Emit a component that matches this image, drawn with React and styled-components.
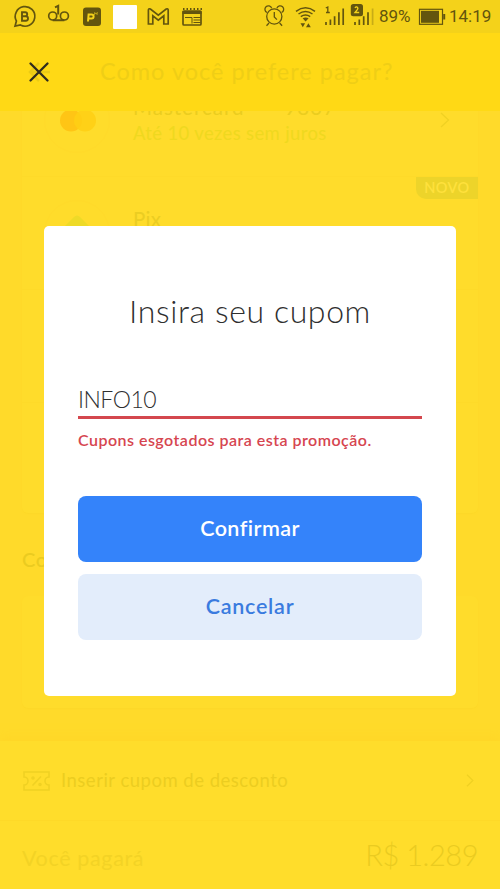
import styled, { createGlobalStyle } from "styled-components";

export default function App() {
    return (
        <>
            <GlobalStyle />
            <Screen>
                <StatusBar />
                <Header>
                    <CloseIcon />
                    <HeaderTitle>Como você prefere pagar?</HeaderTitle>
                </Header>

                <Content>
                    <PaymentCard>
                        <Row>
                            <Brand>
                                <svg width="38" height="24" viewBox="0 0 38 24">
                                    <circle cx="13" cy="12.5" r="11" fill="#FFC515" />
                                    <circle cx="27" cy="12.5" r="11" fill="#FFCF14" opacity="0.85" />
                                </svg>
                            </Brand>
                            <RowTexts>
                                <RowTitle>
                                    <span>Mastercard</span>
                                    <Mask>****</Mask>
                                    <span>9837</span>
                                </RowTitle>
                                <RowSubtitle>Até 10 vezes sem juros</RowSubtitle>
                            </RowTexts>
                            <Chevron width="10" height="16" viewBox="0 0 10 16">
                                <path d="M1 1l7.500 7L1 15" />
                            </Chevron>
                        </Row>
                        <Row>
                            <Brand>
                                <svg width="38" height="38" viewBox="0 0 38 38">
                                    <path d="M16 3q3-3 6 0l13 13q3 3 0 6L22 35q-3 3-6 0L3 22q-3-3 0-6z" fill="#EEDA27" />
                                </svg>
                            </Brand>
                            <PixTitle>Pix</PixTitle>
                            <Badge>NOVO</Badge>
                        </Row>
                        <Row />
                        <Row />
                    </PaymentCard>
                    <SectionTitle>Co</SectionTitle>
                    <EmptyCard />
                </Content>

                <Footer>
                    <CouponRow>
                        <TicketIcon />
                        <CouponLabel>Inserir cupom de desconto</CouponLabel>
                        <Chevron width="8" height="13" viewBox="0 0 8 13">
                            <path d="M1 .7l5.800 5.800L1 12.300" />
                        </Chevron>
                    </CouponRow>
                    <TotalRow>
                        <TotalLabel>Você pagará</TotalLabel>
                        <TotalValue>R$ 1.289</TotalValue>
                    </TotalRow>
                </Footer>

                <Modal>
                    <ModalTitle>Insira seu cupom</ModalTitle>
                    <Field>INFO10</Field>
                    <ErrorText>Cupons esgotados para esta promoção.</ErrorText>
                    <Button>Confirmar</Button>
                    <Button $secondary>Cancelar</Button>
                </Modal>
            </Screen>
        </>
    )
};

function StatusIcon({ from, to, children }) {
    return (
        <svg width={to - from} height="33" viewBox={`${from} 0 ${to - from} 33`} fill="none" stroke="#63550E" strokeWidth="1.7">
            {children}
        </svg>
    )
}

function StatusBar() {
    return (
        <Bar>
            <BarGroup>
                <StatusIcon from={12} to={40}>
                    <path d="M15 26.200l1.400-5.200a9.800 9.800 0 1 1 4 4z" />
                    <path d="M22 12.300h3.200a2 2 0 0 1 0 4H22zM22 16.300h3.800a2.200 2.200 0 0 1 0 4.400H22z" strokeWidth="1.900" />
                </StatusIcon>
                <StatusIcon from={40} to={76}>
                    <circle cx="52.700" cy="16" r="4" />
                    <circle cx="64.400" cy="16" r="4" />
                    <path d="M52.700 20.200h11.700M55 7.300l3.200-1.500v8.700" strokeWidth="2" />
                </StatusIcon>
                <StatusIcon from={76} to={107}>
                    <rect x="83" y="7.500" width="18" height="18.500" rx="3" fill="#63550E" stroke="none" />
                    <path d="M88 21.500l.6-7h3a1.900 1.900 0 0 1 0 4h-3" stroke="#F4D21A" strokeWidth="2" />
                    <path d="M94.800 12l-.3 3M97.300 12l-.3 3M94.500 13.500h2.500" stroke="#BFA617" strokeWidth="0.900" />
                </StatusIcon>
                <StatusIcon from={107} to={142}>
                    <rect x="113" y="5" width="24" height="24" rx="1" fill="#fff" stroke="none" />
                </StatusIcon>
                <StatusIcon from={142} to={176}>
                    <path d="M148.400 24V10.200q0-2 2-1.200l7.900 6.200 7.900-6.200q2-.8 2 1.200V24h-4.400v-8.200l-5.500 4.400-5.500-4.400V24z" />
                </StatusIcon>
                <StatusIcon from={176} to={210}>
                    <rect x="183" y="11" width="18" height="14" rx="1" />
                    <path d="M182.500 12.500h19" strokeWidth="3" />
                    <path d="M183 9h19" strokeWidth="2" strokeDasharray="1.500 2" />
                    <path d="M185 17.500h7v6M193.500 17.500h7M193.500 20h7M193.500 22.500h7" strokeWidth="1" />
                </StatusIcon>
            </BarGroup>
            <BarGroup>
                <StatusIcon from={262} to={290}>
                    <g strokeWidth="1.300">
                        <circle cx="274.300" cy="16.500" r="7.600" />
                        <path d="M274.300 12v5l2.600 2.600M269 23l-2.500 2.700M279.600 23l2.500 2.700" />
                        <path d="M267 12.500a3.500 3.500 0 1 1 4.700-4.400M281.600 12.500a3.500 3.500 0 1 0-4.700-4.400" />
                    </g>
                </StatusIcon>
                <StatusIcon from={290} to={320}>
                    <g strokeWidth="1.500">
                        <path d="M296 11.300q9.500-7 19 0M298.500 14q7-5 14 0M300.800 16.600q4.700-3.200 9.400 0" />
                        <path d="M302.600 18.200q3-1.600 6 0l-3 3.200z" fill="#63550E" stroke="none" />
                        <path d="M300.500 23.200h4.600l-2.300 4zM306 27.200h4.800l-2.400-4z" fill="#63550E" stroke="none" />
                    </g>
                </StatusIcon>
                <StatusIcon from={320} to={348}>
                    <path d="M326 22v3M330.400 19.500V25M334.600 16.300V25M338.900 12.300V25M343.200 8.500V25" />
                    <path d="M325.800 8l2-1v5.500M326 12.500h3.800" strokeWidth="1.300" />
                </StatusIcon>
                <StatusIcon from={348} to={379}>
                    <rect x="350.800" y="4" width="12.200" height="12.200" rx="2.500" fill="#63550E" stroke="none" />
                    <path d="M355 8q.8-1.400 2-1 1.500.8.300 2.600L355 12.500h4.200" stroke="#F4D21A" strokeWidth="1.400" />
                    <path d="M355 22v3M359.300 19.500V25M363.700 16.300V25M368 12.300V25" />
                    <path d="M372.600 8.500V25" opacity="0.300" />
                </StatusIcon>
                <BarText>89%</BarText>
                <StatusIcon from={415} to={449}>
                    <rect x="419.500" y="9.300" width="23" height="15" strokeWidth="1.200" />
                    <rect x="421" y="10.800" width="18" height="12" fill="#63550E" stroke="none" />
                    <path d="M444.200 14v5.500" strokeWidth="2" />
                </StatusIcon>
                <BarText>14:19</BarText>
            </BarGroup>
        </Bar>
    )
}

function CloseIcon() {
    return (
        <svg width="26" height="24" viewBox="0 0 26 24" fill="none">
            <path d="M4 12h20M13 3l-9 9 9 9" stroke="#EBCB16" strokeWidth="2.500" />
            <path d="M4.500 3.500l17 17M21.500 3.500l-17 17" stroke="#302C1E" strokeWidth="2.300" strokeLinecap="round" />
        </svg>
    )
}

function TicketIcon() {
    return (
        <svg width="27" height="20" viewBox="0 0 27 20" fill="none" stroke="#F0D123" strokeWidth="1.600">
            <path d="M1 1h25v5a4 4 0 0 0 0 8v5H1v-5a4 4 0 0 0 0-8z" />
            <path d="M9.500 14.500l8.500-9" />
            <circle cx="10" cy="7" r="1" />
            <circle cx="17" cy="13.500" r="1" />
        </svg>
    )
}

const GlobalStyle = createGlobalStyle`
  * {
    box-sizing: border-box;
  }

  body {
    margin: 0;
    font-family: Lato, "Open Sans", sans-serif;
    white-space: nowrap;
  }

  svg {
    display: block;
    flex-shrink: 0;
  }
`

const Screen = styled.div`
  position: relative;
  width: 500px;
  height: 889px;
  overflow: hidden;
  display: flex;
  flex-direction: column;
  background: #FFDA2A;
`

const Bar = styled.div`
  height: 33px;
  flex-shrink: 0;
  display: flex;
  justify-content: space-between;
  padding: 0 8px 0 12px;
  background: #F4D21A;
`

const BarGroup = styled.div`
  display: flex;
  align-items: center;

  &:last-child {
    width: 230px;
  }
`

const BarText = styled.span`
  width: 36px;
  flex-shrink: 0;
  color: #63550E;
  font-family: Roboto, sans-serif;
  font-size: 17px;
  line-height: 35px;
`

const Header = styled.div`
  height: 78px;
  flex-shrink: 0;
  display: flex;
  align-items: center;
  gap: 48px;
  padding-left: 26px;
  background: #FFD915;
`

const HeaderTitle = styled.div`
  margin-top: -3px;
  color: #EFCE16;
  font-size: 23.500px;
  letter-spacing: 1px;
`

const Content = styled.div`
  height: 630px;
  flex-shrink: 0;
  overflow: hidden;
  padding: 0 22px;
`

const PaymentCard = styled.div`
  height: 450px;
  margin-top: -48px;
  border-radius: 6px;
  background: #FFDC2B;
  box-shadow: 0 1px 1px #FDD828;
`

const Row = styled.div`
  position: relative;
  height: 113px;
  display: flex;
  align-items: center;
  padding: 0 28px 0 22px;

  & + & {
    border-top: 1px solid #FEDA29;
  }
`

const Brand = styled.div`
  width: 66px;
  height: 66px;
  flex-shrink: 0;
  display: flex;
  align-items: center;
  justify-content: center;
  border: 1px solid #FFDA2A;
  border-radius: 50%;
`

const RowTexts = styled.div`
  flex: 1;
  margin-left: 23px;
`

const RowTitle = styled.div`
  display: flex;
  color: #EBCD1F;
  font-size: 20.500px;
  line-height: 26px;
  letter-spacing: 1px;
`

const Mask = styled.span`
  width: 40px;
  text-align: center;
  letter-spacing: 0;
`

const RowSubtitle = styled.div`
  color: #EFD81F;
  font-size: 18.500px;
  line-height: 26px;
  letter-spacing: 0.350px;
`

const PixTitle = styled.div`
  margin: -28px 0 0 23px;
  color: #EBCD22;
  font-size: 20.500px;
  letter-spacing: 0.300px;
`

const Badge = styled.div`
  position: absolute;
  top: 0;
  right: 0;
  width: 62px;
  height: 22px;
  border-bottom-left-radius: 10px;
  background: #EDD42A;
  color: #FFE13C;
  font-size: 14.500px;
  font-weight: 600;
  line-height: 22px;
  letter-spacing: 0.400px;
  text-align: center;
`

const Chevron = styled.svg`
  fill: none;
  stroke: #F0D123;
  stroke-width: 1.300;
`

const SectionTitle = styled.div`
  margin: 34px 0 25px;
  color: #EBCB20;
  font-size: 20px;
  font-weight: 500;
  line-height: 24px;
  letter-spacing: 0.500px;
`

const EmptyCard = styled.div`
  height: 112px;
  border-radius: 6px;
  background: #FFDC2B;
  box-shadow: 0 1px 1px #FDD828;
`

const Footer = styled.div`
  height: 148px;
  flex-shrink: 0;
  background: #FFDD2B;
  box-shadow: 0 -3px 10px #FFD627;
`

const CouponRow = styled.div`
  height: 80px;
  display: flex;
  align-items: center;
  padding: 0 26px 0 23px;
  border-bottom: 1px solid #FED928;
`

const CouponLabel = styled.div`
  flex: 1;
  margin: -2px 0 0 11px;
  color: #ECCD20;
  font-size: 18.500px;
  letter-spacing: 0.500px;
`

const TotalRow = styled.div`
  display: flex;
  justify-content: space-between;
  align-items: baseline;
  padding: 16px 22px 0;
`

const TotalLabel = styled.div`
  color: #F3D325;
  font-size: 21.500px;
  letter-spacing: 0.650px;
`

const TotalValue = styled.div`
  color: #EACB20;
  font-size: 29px;
  font-weight: 300;
  line-height: 36px;
  letter-spacing: -0.450px;
`

const Modal = styled.div`
  position: absolute;
  top: 226px;
  left: 44px;
  width: 412px;
  height: 470px;
  padding: 65px 34px 0;
  border-radius: 5px;
  background: #FFFFFF;
`

const ModalTitle = styled.div`
  color: #2F2F2F;
  font-size: 32px;
  font-weight: 300;
  line-height: 40px;
  letter-spacing: 0.620px;
  text-align: center;
`

const Field = styled.div`
  height: 39px;
  margin-top: 49px;
  border-bottom: 3px solid #D4474E;
  color: #2F2F2F;
  font-size: 23px;
  font-weight: 300;
  line-height: 38px;
  letter-spacing: -0.500px;
`

const ErrorText = styled.div`
  height: 20px;
  margin: 11px 0 46px;
  color: #D64550;
  font-size: 16px;
  font-weight: 600;
  line-height: 20px;
  letter-spacing: 0.480px;
`

const Button = styled.button`
  display: block;
  width: 344px;
  height: 66px;
  margin-bottom: 12px;
  padding: 0 0 2px;
  border: none;
  border-radius: 8px;
  background: ${(props) => (props.$secondary ? '#E3EDFB' : '#3483FA')};
  color: ${(props) => (props.$secondary ? '#3A7BDF' : '#FFFFFF')};
  font-family: inherit;
  font-size: 21.500px;
  font-weight: 600;
  letter-spacing: ${(props) => (props.$secondary ? '0.750px' : '0.450px')};
`
